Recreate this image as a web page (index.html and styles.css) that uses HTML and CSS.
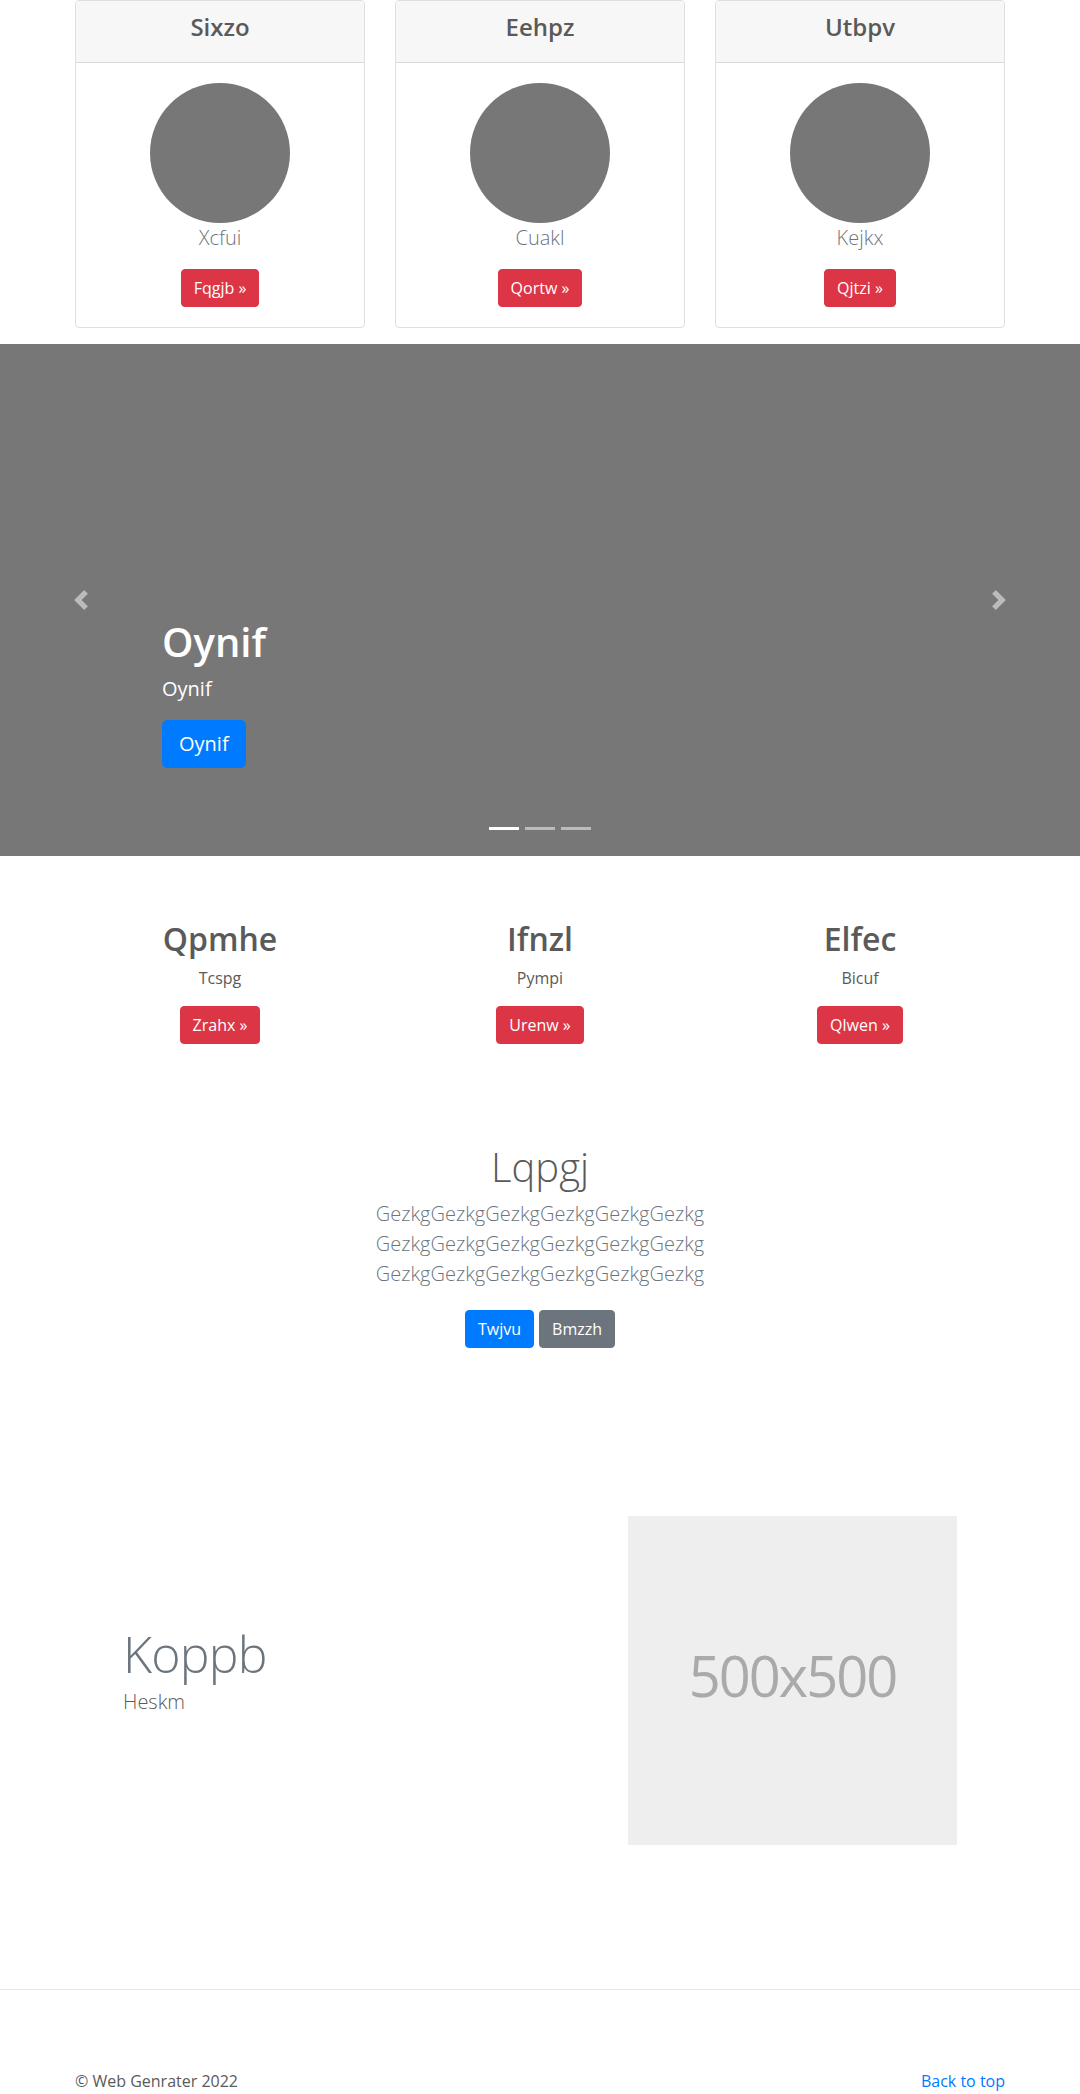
FILE: index.html
```html
<!DOCTYPE html>
<html lang="en">
<head>
<meta charset="utf-8">
<title>Web Genrater</title>
<link rel="stylesheet" href="styles.css">
</head>
<body>
<main>
  <section class="cards">
    <div class="card">
      <div class="card-header"><h4>Sixzo</h4></div>
      <div class="card-body">
        <div class="avatar"></div>
        <p class="lead muted">Xcfui</p>
        <a class="btn btn-danger" href="#">Fqgjb »</a>
      </div>
    </div>
    <div class="card">
      <div class="card-header"><h4>Eehpz</h4></div>
      <div class="card-body">
        <div class="avatar"></div>
        <p class="lead muted">Cuakl</p>
        <a class="btn btn-danger" href="#">Qortw »</a>
      </div>
    </div>
    <div class="card">
      <div class="card-header"><h4>Utbpv</h4></div>
      <div class="card-body">
        <div class="avatar"></div>
        <p class="lead muted">Kejkx</p>
        <a class="btn btn-danger" href="#">Qjtzi »</a>
      </div>
    </div>
  </section>

  <section class="carousel">
    <ol class="indicators">
      <li class="active"></li>
      <li></li>
      <li></li>
    </ol>
    <div class="caption">
      <h1>Oynif</h1>
      <p>Oynif</p>
      <a class="btn btn-lg btn-primary" href="#">Oynif</a>
    </div>
    <a class="control control-prev" href="#" aria-label="Previous">
      <svg width="20" height="20" viewBox="0 0 8 8"><path fill="#fff" d="M5.25 0l-4 4 4 4 1.5-1.5L4.25 4l2.5-2.5L5.25 0z"/></svg>
    </a>
    <a class="control control-next" href="#" aria-label="Next">
      <svg width="20" height="20" viewBox="0 0 8 8"><path fill="#fff" d="M2.75 0l-1.5 1.5L3.75 4l-2.5 2.5L2.75 8l4-4-4-4z"/></svg>
    </a>
  </section>

  <section class="marketing">
    <div class="feature">
      <h2>Qpmhe</h2>
      <p>Tcspg</p>
      <a class="btn btn-danger" href="#">Zrahx »</a>
    </div>
    <div class="feature">
      <h2>Ifnzl</h2>
      <p>Pympi</p>
      <a class="btn btn-danger" href="#">Urenw »</a>
    </div>
    <div class="feature">
      <h2>Elfec</h2>
      <p>Bicuf</p>
      <a class="btn btn-danger" href="#">Qlwen »</a>
    </div>
  </section>

  <section class="jumbo">
    <h1>Lqpgj</h1>
    <p class="lead muted">GezkgGezkgGezkgGezkgGezkgGezkg GezkgGezkgGezkgGezkgGezkgGezkg GezkgGezkgGezkgGezkgGezkgGezkg</p>
    <div class="actions">
      <a class="btn btn-primary" href="#">Twjvu</a>
      <a class="btn btn-secondary" href="#">Bmzzh</a>
    </div>
  </section>

  <section class="featurette">
    <div class="featurette-text">
      <h2>Koppb</h2>
      <p class="lead">Heskm</p>
    </div>
    <svg class="placeholder" width="329" height="329" viewBox="0 0 329 329" role="img" aria-label="Placeholder: 500x500">
      <rect width="100%" height="100%" fill="#eee"/>
      <text x="50%" y="50%" dy=".3em" text-anchor="middle" fill="#aaa">500x500</text>
    </svg>
  </section>
</main>

<hr class="divider">

<footer class="footer">
  <p>&copy; Web Genrater 2022</p>
  <a href="#">Back to top</a>
</footer>
</body>
</html>
```

FILE: styles.css
```css
* {
  box-sizing: border-box;
}

html, body {
  margin: 0;
  padding: 0;
}

body {
  font-family: "Open Sans", "Noto Sans", Arial, sans-serif;
  font-size: 16px;
  line-height: 1.5;
  color: #5a5a5a;
  background: #fff;
}

h1, h2, h4, p {
  margin-top: 0;
}

.muted {
  color: #6c757d;
}

.lead {
  font-size: 20px;
  font-weight: 300;
  line-height: 30px;
}

/* buttons */
.btn {
  display: inline-block;
  padding: 6px 12px;
  font-size: 16px;
  line-height: 24px;
  font-weight: 400;
  border: 1px solid transparent;
  border-radius: 4px;
  color: #fff;
  text-decoration: none;
  text-align: center;
}

.btn-lg {
  padding: 8px 16px;
  font-size: 20px;
  line-height: 30px;
  border-radius: 5px;
}

.btn-danger {
  background: #dc3545;
  border-color: #dc3545;
}

.btn-primary {
  background: #007bff;
  border-color: #007bff;
}

.btn-secondary {
  background: #6c757d;
  border-color: #6c757d;
}

/* cards */
.cards {
  width: 930px;
  margin: 0 auto;
  display: grid;
  grid-template-columns: repeat(3, 290px);
  column-gap: 30px;
}

.card {
  border: 1px solid rgba(0, 0, 0, 0.125);
  border-radius: 4px;
  text-align: center;
  overflow: hidden;
}

.card-header {
  background: #f7f7f7;
  border-bottom: 1px solid rgba(0, 0, 0, 0.125);
  padding: 12px 20px;
}

.card-header h4 {
  font-size: 24px;
  line-height: 28.8px;
  font-weight: 600;
  margin: 0 0 8px;
}

.card-body {
  padding: 20px;
  display: flex;
  flex-direction: column;
  align-items: center;
}

.avatar {
  width: 140px;
  height: 140px;
  border-radius: 50%;
  background: #777;
}

.card-body .lead {
  margin: 0 0 16px;
}

/* carousel */
.carousel {
  position: relative;
  height: 512px;
  margin: 16px 0 64px;
  background: #777;
}

.caption {
  position: absolute;
  left: 162px;
  right: 162px;
  bottom: 88px;
  color: #fff;
}

.caption h1 {
  font-size: 40px;
  line-height: 48px;
  font-weight: 600;
  margin: 0 0 8px;
}

.caption p {
  font-size: 20px;
  line-height: 30px;
  margin: 0 0 16px;
}

.indicators {
  position: absolute;
  left: 0;
  right: 0;
  bottom: 26px;
  margin: 0;
  padding: 0;
  list-style: none;
  display: flex;
  justify-content: center;
}

.indicators li {
  width: 30px;
  height: 3px;
  margin: 0 3px;
  background: rgba(255, 255, 255, 0.5);
}

.indicators li.active {
  background: #fff;
}

.control {
  position: absolute;
  top: 0;
  bottom: 0;
  width: 162px;
  display: flex;
  align-items: center;
  justify-content: center;
  opacity: 0.5;
}

.control svg {
  display: block;
}

.control-prev {
  left: 0;
}

.control-next {
  right: 0;
}

/* marketing */
.marketing {
  width: 960px;
  margin: 0 auto;
  display: grid;
  grid-template-columns: repeat(3, 1fr);
  padding-bottom: 24px;
}

.feature {
  padding: 0 15px;
  text-align: center;
}

.feature h2 {
  font-size: 32px;
  line-height: 38.4px;
  font-weight: 600;
  margin: 0 0 8px;
}

.feature p {
  margin: 0 12px 16px;
}

/* jumbo */
.jumbo {
  padding-top: 75px;
  text-align: center;
}

.jumbo h1 {
  font-size: 40px;
  line-height: 48px;
  font-weight: 300;
  margin: 0 0 8px;
}

.jumbo .lead {
  max-width: 400px;
  margin: 0 auto;
}

.actions {
  margin-top: 21px;
  display: flex;
  justify-content: center;
  gap: 5px;
}

/* featurette */
.featurette {
  width: 834px;
  margin: 168px auto 0;
  display: flex;
  align-items: center;
  gap: 30px;
}

.featurette-text {
  flex: 1;
}

.featurette-text h2 {
  font-size: 50px;
  line-height: 1;
  font-weight: 300;
  letter-spacing: -0.8px;
  color: #6c757d;
  margin: 0 0 8px;
}

.featurette-text .lead {
  margin: 0 0 16px;
}

.placeholder {
  display: block;
  flex: 0 0 329px;
}

.placeholder text {
  font-family: "Open Sans", "Noto Sans", Arial, sans-serif;
  font-size: 56px;
  letter-spacing: -2px;
}

/* footer */
.divider {
  margin: 144px 0 0;
  border: 0;
  border-top: 1px solid rgba(0, 0, 0, 0.1);
  height: 0;
}

.footer {
  width: 930px;
  margin: 0 auto;
  padding-top: 79px;
  display: flex;
  justify-content: space-between;
}

.footer p {
  margin: 0;
}

.footer a {
  color: #007bff;
  text-decoration: none;
}
```
